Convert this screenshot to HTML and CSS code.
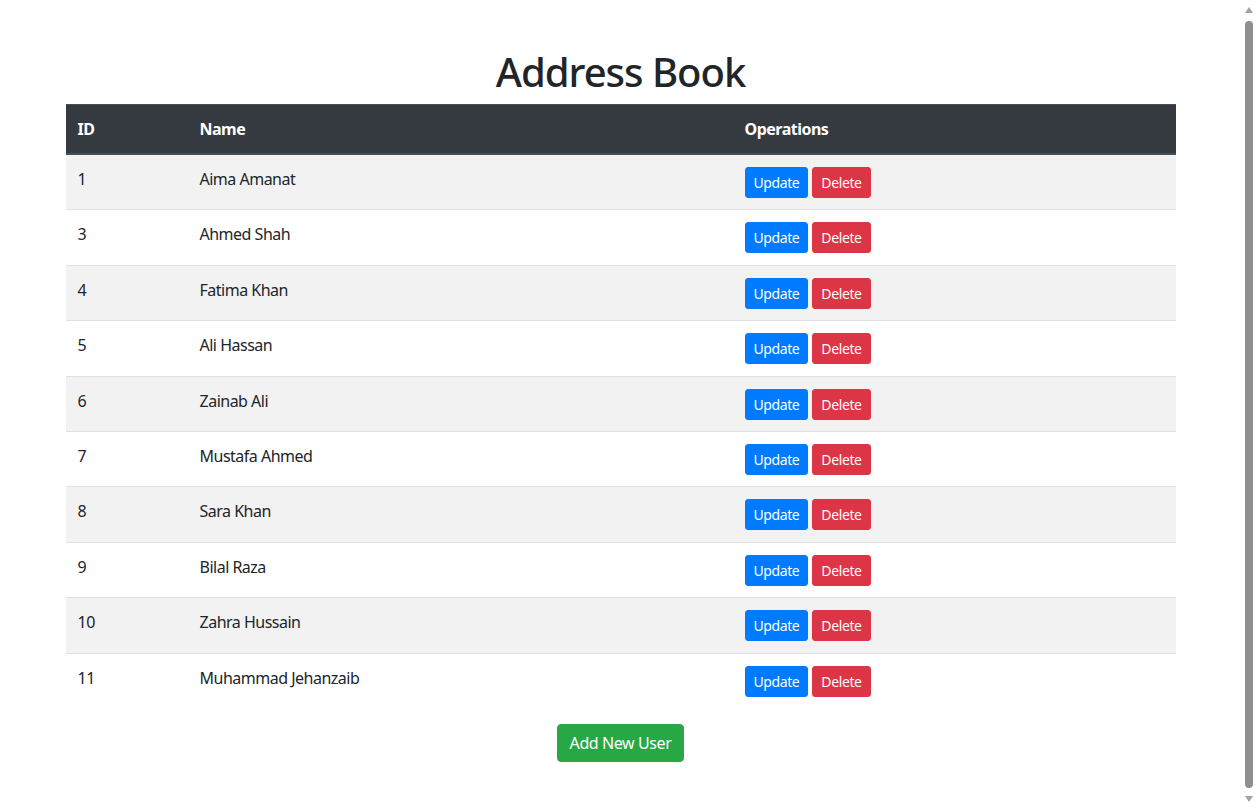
FILE: index.html
```html
<!DOCTYPE html>
<html lang="en">
<head>
<meta charset="utf-8">
<title>Address Book</title>
<link rel="stylesheet" href="styles.css">
</head>
<body>
<div class="container">
  <h1 class="title">Address Book</h1>
  <table class="book">
    <thead>
      <tr>
        <th class="col-id">ID</th>
        <th class="col-name">Name</th>
        <th class="col-ops">Operations</th>
      </tr>
    </thead>
    <tbody>
      <tr><td>1</td><td>Aima Amanat</td><td><div class="ops"><button class="btn btn-primary">Update</button><button class="btn btn-danger">Delete</button></div></td></tr>
      <tr><td>3</td><td>Ahmed Shah</td><td><div class="ops"><button class="btn btn-primary">Update</button><button class="btn btn-danger">Delete</button></div></td></tr>
      <tr><td>4</td><td>Fatima Khan</td><td><div class="ops"><button class="btn btn-primary">Update</button><button class="btn btn-danger">Delete</button></div></td></tr>
      <tr><td>5</td><td>Ali Hassan</td><td><div class="ops"><button class="btn btn-primary">Update</button><button class="btn btn-danger">Delete</button></div></td></tr>
      <tr><td>6</td><td>Zainab Ali</td><td><div class="ops"><button class="btn btn-primary">Update</button><button class="btn btn-danger">Delete</button></div></td></tr>
      <tr><td>7</td><td>Mustafa Ahmed</td><td><div class="ops"><button class="btn btn-primary">Update</button><button class="btn btn-danger">Delete</button></div></td></tr>
      <tr><td>8</td><td>Sara Khan</td><td><div class="ops"><button class="btn btn-primary">Update</button><button class="btn btn-danger">Delete</button></div></td></tr>
      <tr><td>9</td><td>Bilal Raza</td><td><div class="ops"><button class="btn btn-primary">Update</button><button class="btn btn-danger">Delete</button></div></td></tr>
      <tr><td>10</td><td>Zahra Hussain</td><td><div class="ops"><button class="btn btn-primary">Update</button><button class="btn btn-danger">Delete</button></div></td></tr>
      <tr><td>11</td><td>Muhammad Jehanzaib</td><td><div class="ops"><button class="btn btn-primary">Update</button><button class="btn btn-danger">Delete</button></div></td></tr>
    </tbody>
  </table>
  <div class="actions">
    <button class="btn-add">Add New User</button>
  </div>
</div>
<div class="scrollbar" aria-hidden="true">
  <span class="arrow arrow-up"></span>
  <span class="thumb"></span>
  <span class="arrow arrow-down"></span>
</div>
</body>
</html>
```
FILE: styles.css
```css
html, body {
  margin: 0;
  padding: 0;
}
body {
  font-family: "Noto Sans", "Open Sans", sans-serif;
  font-size: 16px;
  line-height: 1.5;
  color: #212529;
  background: #fff;
  padding-right: 15px;
}
.container {
  width: 1110px;
  margin: 0 auto;
  padding: 48px 0 40px;
}
.title {
  margin: 0 0 8px;
  font-size: 40px;
  font-weight: 500;
  line-height: 48px;
  letter-spacing: -1px;
  text-align: center;
}
.book {
  width: 100%;
  border-collapse: collapse;
  margin-bottom: 16px;
  letter-spacing: -0.5px;
}
.book th {
  background: #343a40;
  color: #fff;
  text-align: left;
  font-weight: 700;
  padding: 12px;
  border-top: 1px solid #454d55;
  border-bottom: 2px solid #454d55;
  line-height: 24px;
}
.col-id { width: 98px; }
.col-name { width: 521px; }
.book td {
  padding: 12px;
  border-top: 1px solid #dee2e6;
  vertical-align: top;
  line-height: 24px;
  font-size: 16px;
}
.book tbody tr:nth-child(odd) td {
  background: #f2f2f2;
}
.book tbody tr:first-child td {
  border-top: none;
}
.ops {
  display: flex;
  gap: 4px;
  height: 30.4px;
}
.btn {
  font-family: inherit;
  font-size: 14px;
  line-height: 21px;
  letter-spacing: -0.4px;
  padding: 4px 8px;
  border: 1px solid transparent;
  border-radius: 3px;
  color: #fff;
  height: 31px;
  cursor: pointer;
}
.btn-primary {
  background: #007bff;
  border-color: #007bff;
}
.btn-danger {
  background: #dc3545;
  border-color: #dc3545;
}
.actions {
  text-align: center;
}
.btn-add {
  font-family: inherit;
  font-size: 16px;
  line-height: 24px;
  letter-spacing: -0.4px;
  padding: 6px 12px;
  border: 1px solid #28a745;
  border-radius: 4px;
  background: #28a745;
  color: #fff;
  height: 38px;
}
.scrollbar {
  position: fixed;
  top: 0;
  right: 0;
  width: 15px;
  height: 100%;
  background: #fff;
  display: flex;
  flex-direction: column;
  align-items: center;
  padding: 7px 0;
  box-sizing: border-box;
  gap: 8px;
}
.arrow {
  width: 0;
  height: 0;
  border-left: 4px solid transparent;
  border-right: 4px solid transparent;
  flex: none;
}
.arrow-up {
  border-bottom: 6px solid #a3a3a3;
}
.arrow-down {
  border-top: 6px solid #a3a3a3;
}
.thumb {
  flex: 1;
  width: 8px;
  background: #8f8f8f;
  border-radius: 4px;
  margin-left: 1px;
}
```
